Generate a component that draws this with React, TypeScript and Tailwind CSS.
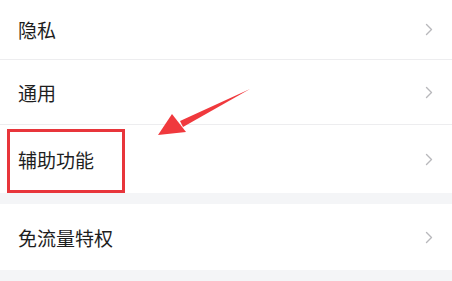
import React from 'react';

function Chevron() {
  return (
    <svg width="8" height="13" viewBox="0 0 8 13" fill="none" className="text-[#b8b8bc]">
      <path d="M1.5 1.5 L6.5 6.5 L1.5 11.5" stroke="currentColor" strokeWidth="1.4" strokeLinecap="round" strokeLinejoin="round" />
    </svg>
  );
}

function Row({ label, h, border }: { label: string; h: string; border?: boolean }) {
  return (
    <div className={`flex items-center justify-between bg-white pl-[18px] pr-[19px] ${h} ${border ? 'border-b border-[#ededef]' : ''}`}>
      <span className="text-[19px] leading-none text-[#1e1e1e]">{label}</span>
      <Chevron />
    </div>
  );
}

export default function App() {
  return (
    <div
      className="relative h-[281px] w-[452px] overflow-hidden bg-[#f4f5f7]"
      style={{ fontFamily: '"Noto Sans CJK SC", "Noto Sans", sans-serif' }}
    >
      <Row label="隐私" h="h-[60px]" border />
      <Row label="通用" h="h-[65px]" border />
      <Row label="辅助功能" h="h-[68px]" />
      <div className="h-[11px]" />
      <Row label="免流量特权" h="h-[66px]" />

      {/* highlight box */}
      <div className="absolute left-[7px] top-[129px] h-[64px] w-[118px] border-[3px] border-[#e8353b]" />

      {/* arrow */}
      <svg className="absolute left-0 top-0" width="452" height="281" viewBox="0 0 452 281">
        <path d="M250 89 L180 121 L183 127 Z" fill="#f0393d" />
        <path d="M158 135 L172 114 L186 132 Z" fill="#f0393d" />
      </svg>
    </div>
  );
}
